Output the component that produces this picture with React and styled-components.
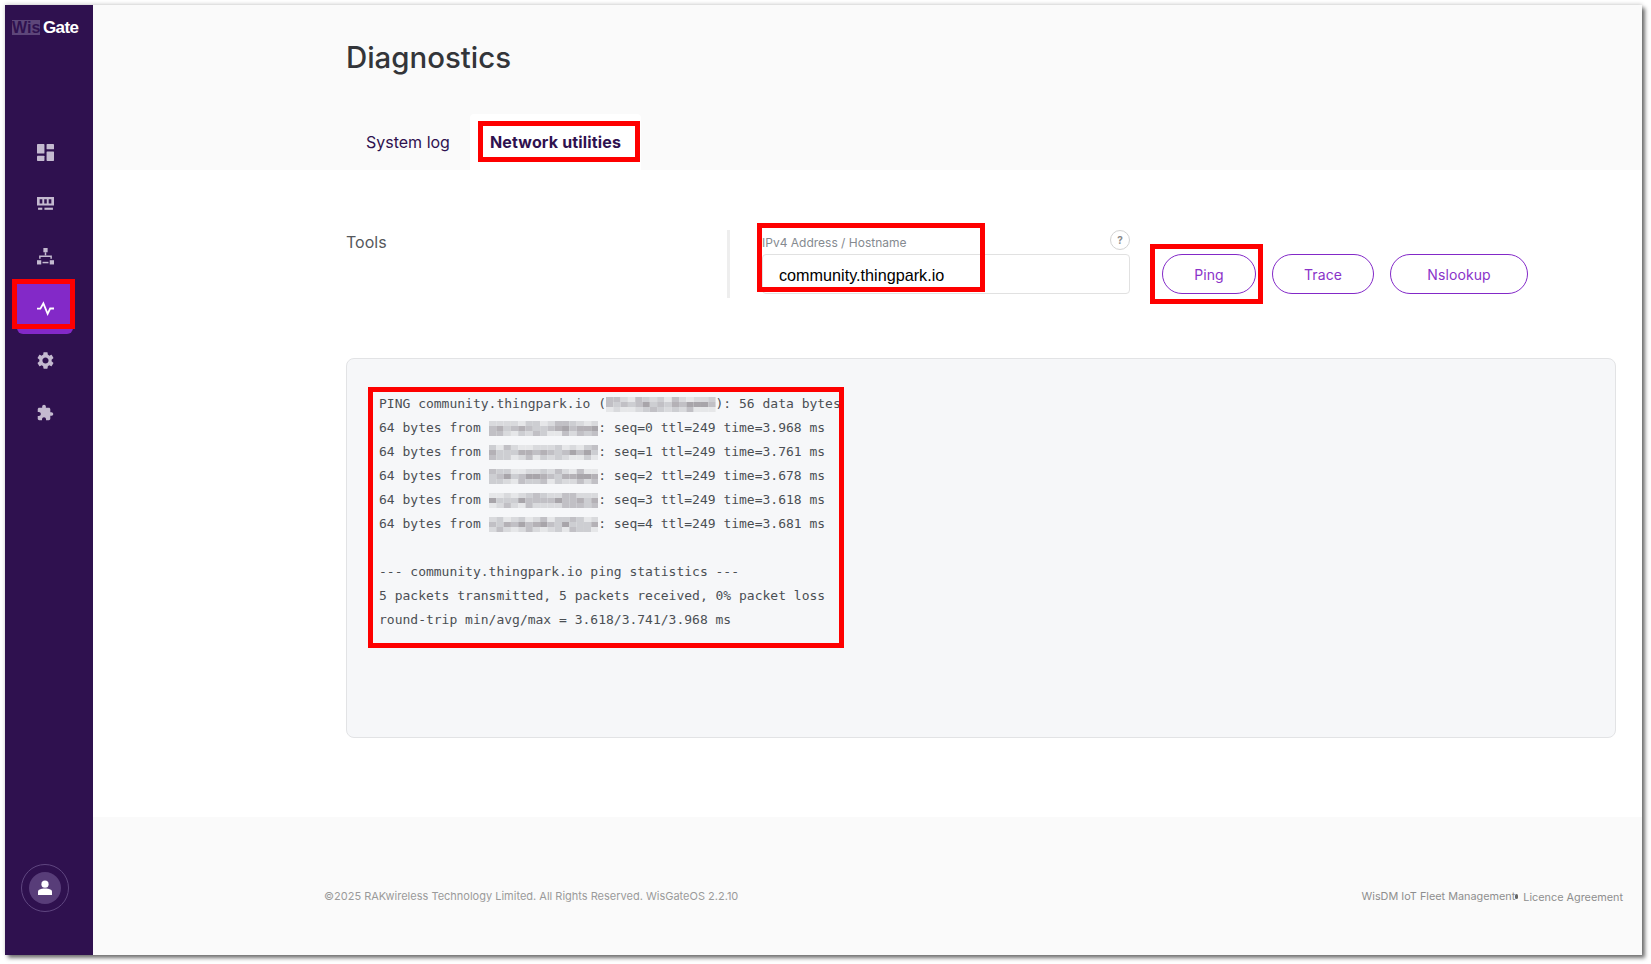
import React from 'react';
import styled, { createGlobalStyle } from 'styled-components';

const Global = createGlobalStyle`
  html, body { margin: 0; padding: 0; background: #fff; }
  body { font-family: Inter, "Liberation Sans", sans-serif; overflow: hidden; }
  * { box-sizing: border-box; }
`;

const Page = styled.div`
  width: 1651px;
  height: 964px;
  padding: 5px 9px 9px 5px;
`;
const Frame = styled.div`
  display: flex;
  height: 950px;
  background: #fafafa;
  box-shadow: 0 -1px 4px rgba(0,0,0,.16), 3px 3px 4px rgba(0,0,0,.55);
`;
const Sidebar = styled.nav`
  width: 88px;
  flex: none;
  background: #2f114f;
  display: flex;
  flex-direction: column;
  align-items: flex-start;
`;
const Logo = styled.div`
  display: flex;
  align-items: center;
  height: 15px;
  margin: 15px 0 0 7px;
  font: 700 17px "Liberation Sans", sans-serif;
  letter-spacing: -.6px;
`;
const LogoWis = styled.span`
  width: 28px;
  height: 15px;
  font-size: 16px;
  letter-spacing: 0;
  line-height: 15px;
  text-align: center;
  background: #5d4679;
  color: #2f114f;
`;
const LogoGate = styled.span`
  color: #fff;
  margin-left: 3px;
`;
const NavList = styled.div`
  margin: 93px 0 0 12px;
  display: flex;
  flex-direction: column;
  align-items: center;
  gap: 2px;
`;
const NavItem = styled.div`
  position: relative;
  width: 56px;
  height: 50px;
  display: flex;
  align-items: center;
  justify-content: center;
  border-radius: ${p => (p.$active ? '0 0 6px 6px' : '0')};
  background: ${p => (p.$active ? '#8329c8' : 'transparent')};
  color: ${p => (p.$active ? '#fff' : '#c4bad0')};
  & > svg { width: 17px; height: 17px; display: block; transform: translateY(-1px); }
`;
const Highlight = styled.div`
  position: absolute;
  top: ${p => p.$t}px;
  left: ${p => p.$l}px;
  right: ${p => p.$r}px;
  bottom: ${p => p.$b}px;
  border: 5px solid #fe0000;
  pointer-events: none;
`;
const Avatar = styled.div`
  margin: auto 0 43px 16px;
  width: 48px;
  height: 48px;
  border: 1px solid #5f4680;
  border-radius: 50%;
  display: flex;
  align-items: center;
  justify-content: center;
`;
const AvatarInner = styled.div`
  width: 32px;
  height: 32px;
  border-radius: 50%;
  background: #583d79;
  color: #fff;
  display: flex;
  align-items: center;
  justify-content: center;
`;
const Main = styled.main`
  flex: 1;
  min-width: 0;
  display: flex;
  flex-direction: column;
`;
const Header = styled.header`
  height: 165px;
  flex: none;
  padding-left: 254px;
  display: flex;
  flex-direction: column;
  justify-content: space-between;
`;
const Title = styled.h1`
  margin: 33px 0 0 -1px;
  font: 500 29.4px/39px Inter, sans-serif;
  color: #333539;
`;
const Tabs = styled.div`
  display: flex;
  height: 56px;
`;
const Tab = styled.div`
  position: relative;
  width: ${p => p.$w}px;
  padding-left: ${p => p.$pad}px;
  border-radius: 4px 4px 0 0;
  background: ${p => (p.$active ? '#fff' : 'transparent')};
  color: #2f114f;
  letter-spacing: ${p => (p.$active ? '.15px' : '0')};
  font: ${p => (p.$active ? 700 : 400)} 16px/56px Inter, sans-serif;
`;
const Body = styled.section`
  flex: 1;
  background: #fff;
  padding: 53px 26px 0 253px;
`;
const ToolRow = styled.div`
  display: flex;
  align-items: flex-start;
`;
const ToolLabel = styled.div`
  width: 381px;
  flex: none;
  margin-top: 7px;
  font: 400 16px/24px Inter, sans-serif;
  color: #55585c;
`;
const Divider = styled.div`
  width: 3px;
  height: 68px;
  margin-top: 7px;
  background: #eeeeee;
`;
const Field = styled.div`
  position: relative;
  width: 368px;
  margin-left: 32px;
`;
const FieldHead = styled.div`
  height: 31px;
  display: flex;
  align-items: flex-end;
  justify-content: space-between;
`;
const FieldLabel = styled.label`
  font: 400 12px/22px Inter, sans-serif;
  color: #858a90;
`;
const Help = styled.span`
  width: 20px;
  height: 20px;
  margin-bottom: 4px;
  border: 1px solid #d3d3d3;
  border-radius: 50%;
  text-align: center;
  font: 700 10px/18px Inter, sans-serif;
  color: #8b8b8b;
`;
const TextBox = styled.div`
  height: 40px;
  border: 1px solid #e1e1e1;
  border-radius: 4px;
  padding: 1px 0 0 16px;
  font: 400 16.2px/38px "Liberation Sans", sans-serif;
  color: #000;
`;
const Actions = styled.div`
  display: flex;
  gap: 16px;
  margin: 31px 0 0 32px;
`;
const Pill = styled.button`
  position: relative;
  width: ${p => p.$w}px;
  height: 40px;
  padding: 2px 0 0;
  border: 1px solid #8329c8;
  border-radius: 20px;
  background: #fff;
  color: #8a33c9;
  letter-spacing: .1px;
  font: 400 14px/36px Inter, sans-serif;
`;
const Console = styled.div`
  position: relative;
  height: 380px;
  margin-top: 60px;
  padding: 33px 0 0 32px;
  background: #f6f7f9;
  border: 1px solid #e2e3e5;
  border-radius: 8px;
`;
const Line = styled.div`
  height: 24px;
  display: flex;
  align-items: center;
  white-space: pre;
  font: 400 13px/24px "DejaVu Sans Mono", monospace;
  color: #4b4f54;
`;
const MosaicSvg = styled.svg`
  width: 14ch;
  height: 15px;
  flex: none;
  display: block;
`;
const Footer = styled.footer`
  height: 138px;
  flex: none;
  padding: 71px 19px 0 231px;
  display: flex;
  justify-content: space-between;
  font: 400 11px/16px Inter, sans-serif;
  color: #9a9a9a;
`;
const FootLinks = styled.div`
  display: flex;
  align-items: center;
  height: 16px;
  font-size: 10.85px;
`;
const FootLink = styled.span`
  color: #8e8e8e;
  transform: translateY(${p => p.$dy || 0}px);
`;
const Dot = styled.span`
  width: 3px;
  height: 5px;
  margin: 0 5px 0 0;
  background: #666;
  border-radius: 2px;
`;

function Mosaic({ seed }) {
  const rects = [];
  let s = seed * 7919 + 13;
  const rand = () => { s = (s * 1103515245 + 12345) & 0x7fffffff; return s / 0x7fffffff; };
  const shades = ['#e6e7e9', '#d9dadd', '#cdced2', '#c1c0c5', '#b4b1b6', '#a8a5aa'];
  for (let y = 0; y < 3; y++) {
    for (let x = 0; x < 15; x++) {
      const r = rand();
      const gap = x === 3 || x === 8;
      const base = y === 1 ? 2 : 0;
      const i = Math.min(5, base + Math.floor(r * (gap ? 2 : 4)));
      rects.push(<rect key={`${x}-${y}`} x={x * 7.4} y={y * 5} width="7.4" height="5" fill={shades[i]} />);
    }
  }
  return <MosaicSvg viewBox="0 0 111 15" preserveAspectRatio="none" aria-hidden="true">{rects}</MosaicSvg>;
}

const Dashboard = () => (
  <svg viewBox="0 0 16 16" fill="currentColor"><rect x="0" y="0" width="7" height="9" rx=".6" /><rect x="9" y="0" width="7" height="5" rx=".6" /><rect x="0" y="11" width="7" height="5" rx=".6" /><rect x="9" y="7" width="7" height="9" rx=".6" /></svg>
);
const Memory = () => (
  <svg viewBox="0 0 16 16" fill="currentColor"><path fillRule="evenodd" d="M0 1h16v8H0zM2.5 3v4H5V3zM6.8 3v4h2.4V3zM11 3v4h2.5V3z" /><rect x="1" y="11" width="4" height="2" /><rect x="7" y="11" width="8" height="2" /></svg>
);
const Network = () => (
  <svg viewBox="0 0 16 16" fill="currentColor"><rect x="6" y="0" width="4" height="4" /><rect x="7.3" y="4" width="1.4" height="3" /><path d="M2 7h12v3h-1.4V8.4H3.4V10H2z" /><rect x="0" y="11.5" width="4" height="4" /><rect x="5.2" y="13" width="5.6" height="1.4" /><rect x="12" y="11.5" width="4" height="4" /></svg>
);
const Pulse = () => (
  <svg viewBox="0 0 16 16" fill="none" stroke="currentColor" strokeWidth="1.7"><path d="M0 8.2h3.2L6 3.2 10 13l2.4-5h3.6" /></svg>
);
const Gear = () => (
  <svg viewBox="2 2 20 20" fill="currentColor"><path d="M19.14 12.94c.04-.3.06-.61.06-.94 0-.32-.02-.64-.07-.94l2.03-1.58c.18-.14.23-.41.12-.61l-1.92-3.32c-.12-.22-.37-.29-.59-.22l-2.39.96c-.5-.38-1.03-.7-1.62-.94l-.36-2.54c-.04-.24-.24-.41-.48-.41h-3.84c-.24 0-.43.17-.47.41l-.36 2.54c-.59.24-1.13.57-1.62.94l-2.39-.96c-.22-.08-.47 0-.59.22L2.74 8.87c-.12.21-.08.47.12.61l2.03 1.58c-.05.3-.09.63-.09.94s.02.64.07.94l-2.03 1.58c-.18.14-.23.41-.12.61l1.92 3.32c.12.22.37.29.59.22l2.39-.96c.5.38 1.03.7 1.62.94l.36 2.54c.05.24.24.41.48.41h3.84c.24 0 .44-.17.47-.41l.36-2.54c.59-.24 1.13-.56 1.62-.94l2.39.96c.22.08.47 0 .59-.22l1.92-3.32c.12-.22.07-.47-.12-.61l-2.01-1.58zM12 15.6c-1.98 0-3.6-1.62-3.6-3.6s1.62-3.6 3.6-3.6 3.6 1.62 3.6 3.6-1.62 3.6-3.6 3.6z" /></svg>
);
const Puzzle = () => (
  <svg viewBox="1 0 23 23" fill="currentColor"><path d="M20.5 11H19V7c0-1.1-.9-2-2-2h-4V3.5C13 2.12 11.88 1 10.5 1S8 2.12 8 3.5V5H4c-1.1 0-1.99.9-1.99 2v3.8H3.5c1.49 0 2.7 1.21 2.7 2.7s-1.21 2.7-2.7 2.7H2V20c0 1.1.9 2 2 2h3.8v-1.5c0-1.49 1.21-2.7 2.7-2.7 1.49 0 2.7 1.21 2.7 2.7V22H17c1.1 0 2-.9 2-2v-4h1.5c1.38 0 2.5-1.12 2.5-2.5S21.88 11 20.5 11z" /></svg>
);
const Person = () => (
  <svg width="16" height="16" viewBox="0 0 16 16" fill="currentColor"><circle cx="8" cy="4.2" r="3.6" /><path d="M1 15v-3.4c0-1.6 2.6-3 7-3s7 1.4 7 3V15z" /></svg>
);

const pings = [
  ['0', '3.968'],
  ['1', '3.761'],
  ['2', '3.678'],
  ['3', '3.618'],
  ['4', '3.681'],
];

export default function App() {
  return (
    <Page>
      <Global />
      <Frame>
        <Sidebar>
          <Logo><LogoWis>Wis</LogoWis><LogoGate>Gate</LogoGate></Logo>
          <NavList>
            <NavItem><Dashboard /></NavItem>
            <NavItem><Memory /></NavItem>
            <NavItem><Network /></NavItem>
            <NavItem $active>
              <Pulse />
              <Highlight $t={-5} $l={-5} $r={-2} $b={5} />
            </NavItem>
            <NavItem><Gear /></NavItem>
            <NavItem><Puzzle /></NavItem>
          </NavList>
          <Avatar><AvatarInner><Person /></AvatarInner></Avatar>
        </Sidebar>
        <Main>
          <Header>
            <Title>Diagnostics</Title>
            <Tabs>
              <Tab $w={123} $pad={19}>System log</Tab>
              <Tab $w={171} $pad={20} $active>
                Network utilities
                <Highlight $t={7} $l={8} $r={1} $b={8} />
              </Tab>
            </Tabs>
          </Header>
          <Body>
            <ToolRow>
              <ToolLabel>Tools</ToolLabel>
              <Divider />
              <Field>
                <FieldHead>
                  <FieldLabel>IPv4 Address / Hostname</FieldLabel>
                  <Help>?</Help>
                </FieldHead>
                <TextBox>community.thingpark.io</TextBox>
                <Highlight $t={0} $l={-5} $r={145} $b={2} />
              </Field>
              <Actions>
                <Pill $w={94}>
                  Ping
                  <Highlight $t={-11} $l={-13} $r={-8} $b={-11} />
                </Pill>
                <Pill $w={102}>Trace</Pill>
                <Pill $w={138}>Nslookup</Pill>
              </Actions>
            </ToolRow>
            <Console>
              <Line>PING community.thingpark.io (<Mosaic seed={1} />): 56 data bytes</Line>
              {pings.map(([seq, time], i) => (
                <Line key={seq}>64 bytes from <Mosaic seed={i + 2} />: seq={seq} ttl=249 time={time} ms</Line>
              ))}
              <Line> </Line>
              <Line>--- community.thingpark.io ping statistics ---</Line>
              <Line>5 packets transmitted, 5 packets received, 0% packet loss</Line>
              <Line>round-trip min/avg/max = 3.618/3.741/3.968 ms</Line>
              <Highlight $t={28} $l={21} $r={771} $b={89} />
            </Console>
          </Body>
          <Footer>
            <span>©2025 RAKwireless Technology Limited. All Rights Reserved. WisGateOS 2.2.10</span>
            <FootLinks>
              <FootLink>WisDM IoT Fleet Management</FootLink>
              <Dot />
              <FootLink $dy={1}>Licence Agreement</FootLink>
            </FootLinks>
          </Footer>
        </Main>
      </Frame>
    </Page>
  );
}
